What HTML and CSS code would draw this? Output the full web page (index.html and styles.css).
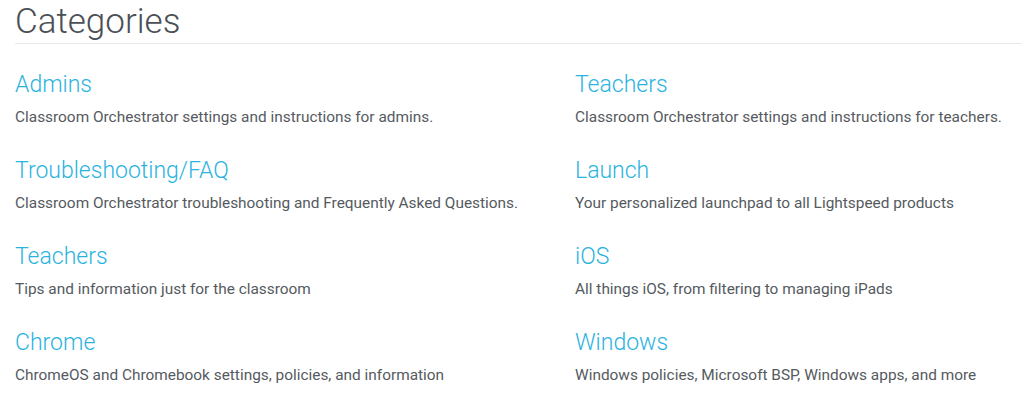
FILE: index.html
```html
<html lang="en">
<head>
    <meta charset="UTF-8">
    <meta name="viewport" content="width=device-width, initial-scale=1.0">
    <title>Categories</title>
    <link rel="stylesheet" href="styles.css">
</head>
<body>
    <div class="page">
        <h1 class="page-title">Categories</h1>
        <ul class="categories">
            <li class="category">
                <a class="category-name" href="#">Admins</a>
                <p class="category-desc">Classroom Orchestrator settings and instructions for admins.</p>
            </li>
            <li class="category">
                <a class="category-name" href="#">Teachers</a>
                <p class="category-desc">Classroom Orchestrator settings and instructions for teachers.</p>
            </li>
            <li class="category">
                <a class="category-name" href="#">Troubleshooting/FAQ</a>
                <p class="category-desc">Classroom Orchestrator troubleshooting and Frequently Asked Questions.</p>
            </li>
            <li class="category">
                <a class="category-name" href="#">Launch</a>
                <p class="category-desc">Your personalized launchpad to all Lightspeed products</p>
            </li>
            <li class="category">
                <a class="category-name" href="#">Teachers</a>
                <p class="category-desc">Tips and information just for the classroom</p>
            </li>
            <li class="category">
                <a class="category-name" href="#">iOS</a>
                <p class="category-desc">All things iOS, from filtering to managing iPads</p>
            </li>
            <li class="category">
                <a class="category-name" href="#">Chrome</a>
                <p class="category-desc">ChromeOS and Chromebook settings, policies, and information</p>
            </li>
            <li class="category">
                <a class="category-name" href="#">Windows</a>
                <p class="category-desc">Windows policies, Microsoft BSP, Windows apps, and more</p>
            </li>
        </ul>
    </div>
</body>
</html>
```

FILE: styles.css
```css
body {
    margin: 0;
    background: #fff;
    font-family: Roboto, "Liberation Sans", sans-serif;
}

.page {
    padding: 0 2px 0 15px;
}

.page-title {
    margin: 0;
    height: 43px;
    line-height: 44px;
    font-size: 35px;
    font-weight: 300;
    color: #4b4f56;
    border-bottom: 1px solid #e8e8e8;
}

.categories {
    list-style: none;
    margin: 0;
    padding: 25px 0 0 0;
    display: grid;
    grid-template-columns: 560px 1fr;
}

.category {
    height: 86px;
}

.category-name {
    display: block;
    font-size: 23px;
    font-weight: 300;
    line-height: 32px;
    color: #2bb3e0;
    text-decoration: none;
}

.category-desc {
    margin: 6px 0 0 0;
    font-size: 15.4px;
    line-height: 20px;
    color: #555a60;
}
```
